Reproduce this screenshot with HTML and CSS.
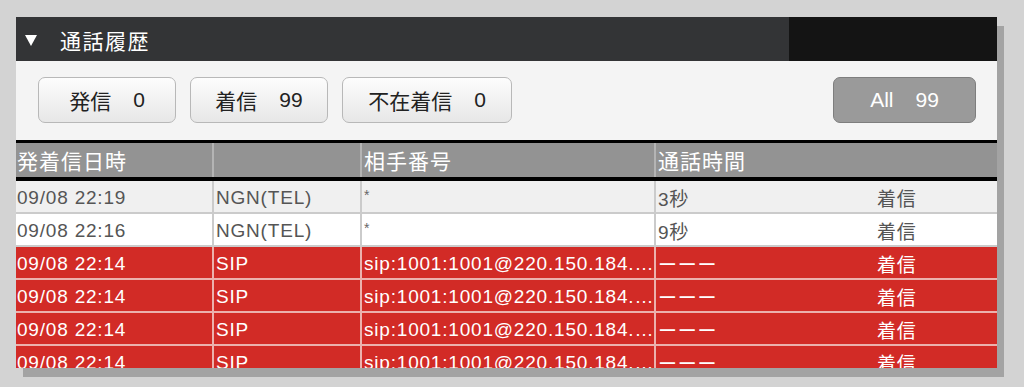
FILE: index.html
```html
<!DOCTYPE html>
<html lang="ja">
<head>
<meta charset="utf-8">
<title>通話履歴</title>
<link rel="stylesheet" href="styles.css">
</head>
<body>
<div class="panel">
  <div class="titlebar">
    <div class="title">
      <svg class="tri" width="12" height="11" viewBox="0 0 12 11"><polygon points="0,0 12,0 6,11" fill="#fff"/></svg>
      <span class="title-text">通話履歴</span>
    </div>
    <div class="title-end"></div>
  </div>
  <div class="toolbar">
    <div class="btns">
      <button class="btn w1"><span>発信</span><span>0</span></button>
      <button class="btn w1"><span>着信</span><span>99</span></button>
      <button class="btn w2"><span>不在着信</span><span>0</span></button>
    </div>
    <button class="btn all"><span>All</span><span>99</span></button>
  </div>
  <div class="table">
    <div class="row head">
      <div class="cell">発着信日時</div>
      <div class="cell"></div>
      <div class="cell">相手番号</div>
      <div class="cell span2">通話時間</div>
    </div>
    <div class="row odd">
      <div class="cell">09/08 22:19</div>
      <div class="cell">NGN(TEL)</div>
      <div class="cell star">*</div>
      <div class="cell">3秒</div>
      <div class="cell type">着信</div>
    </div>
    <div class="row even">
      <div class="cell">09/08 22:16</div>
      <div class="cell">NGN(TEL)</div>
      <div class="cell star">*</div>
      <div class="cell">9秒</div>
      <div class="cell type">着信</div>
    </div>
    <div class="row red">
      <div class="cell">09/08 22:14</div>
      <div class="cell">SIP</div>
      <div class="cell">sip:1001:1001@220.150.184.…</div>
      <div class="cell">ーーー</div>
      <div class="cell type">着信</div>
    </div>
    <div class="row red">
      <div class="cell">09/08 22:14</div>
      <div class="cell">SIP</div>
      <div class="cell">sip:1001:1001@220.150.184.…</div>
      <div class="cell">ーーー</div>
      <div class="cell type">着信</div>
    </div>
    <div class="row red">
      <div class="cell">09/08 22:14</div>
      <div class="cell">SIP</div>
      <div class="cell">sip:1001:1001@220.150.184.…</div>
      <div class="cell">ーーー</div>
      <div class="cell type">着信</div>
    </div>
    <div class="row red">
      <div class="cell">09/08 22:14</div>
      <div class="cell">SIP</div>
      <div class="cell">sip:1001:1001@220.150.184.…</div>
      <div class="cell">ーーー</div>
      <div class="cell type">着信</div>
    </div>
  </div>
</div>
</body>
</html>
```
FILE: styles.css
```css
* { box-sizing: border-box; }
html, body { margin: 0; padding: 0; }
body {
  background: #d3d3d3;
  font-family: "Liberation Sans", "Noto Sans CJK JP", sans-serif;
  height: 387px;
  overflow: hidden;
  padding: 17px 0 0 16px;
}
.panel {
  width: 981px;
  height: 351px;
  overflow: hidden;
  background: #f4f4f4;
  box-shadow: 7px 9px 0 #a3a3a3;
}
.titlebar {
  display: flex;
  height: 44px;
  background: #333436;
}
.title {
  flex: 1;
  display: flex;
  align-items: center;
  padding-left: 9px;
  color: #fff;
}
.tri { display: block; margin-top: 2px; }
.title-text {
  margin-left: 23px;
  font-size: 21px;
  letter-spacing: 1.5px;
  margin-top: 2px;
}
.title-end {
  width: 208px;
  background: #141414;
}
.toolbar {
  height: 79px;
  display: flex;
  justify-content: space-between;
  align-items: flex-start;
  padding: 16px 21px 0 22px;
}
.btns { display: flex; gap: 14px; }
.btn {
  height: 46px;
  display: flex;
  align-items: center;
  justify-content: center;
  gap: 22px;
  border: 1px solid #b8b8b8;
  border-radius: 7px;
  background: linear-gradient(#fdfdfd, #e7e7e7);
  color: #222;
  font-family: "Liberation Sans", "Noto Sans CJK JP", sans-serif;
  font-size: 21px;
  padding: 0;
}
.w1 { width: 138px; }
.w2 { width: 170px; }
.all {
  width: 143px;
  background: #9a9a9a;
  border-color: #7e7e7e;
  color: #fff;
}
.table {
  border-top: 3px solid #000;
}
.row {
  display: grid;
  grid-template-columns: 196px 148px 294px 223px 120px;
  height: 33px;
  border-bottom: 2px solid #cbcbcb;
  font-size: 19px;
  letter-spacing: 0.8px;
  color: #555;
}
.row.head {
  height: 38px;
  background: #939393;
  color: #fff;
  font-size: 21px;
  letter-spacing: 1px;
  border-bottom: 4px solid #000;
}
.cell {
  display: flex;
  align-items: center;
  padding: 2px 0 0 2px;
  white-space: nowrap;
  overflow: hidden;
  border-left: 2px solid #cbcbcb;
}
.cell:first-child { border-left: none; padding-left: 1px; }
.cell.type { border-left: none; padding-left: 0; }
.head .cell { border-left-color: #b4b4b4; padding-top: 0; }
.head .cell:first-child { border-left: none; }
.span2 { grid-column: span 2; }
.odd { background: #f0f0f0; }
.even { background: #fff; }
.star { align-items: flex-start; padding-top: 6px; font-size: 14px; color: #666; }
.red {
  background: #d22b26;
  color: #fff;
  border-bottom-color: #ecb1ad;
}
.red .cell { border-left-color: #ecb1ad; }
.red .cell.type { border-left: none; }
.red .cell:first-child { border-left: none; }
```
